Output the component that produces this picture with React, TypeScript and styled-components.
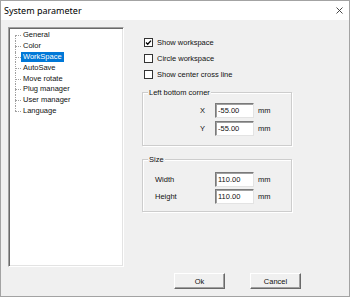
import React from 'react';
import styled, { createGlobalStyle } from 'styled-components';

const Global = createGlobalStyle`
  html, body { margin: 0; padding: 0; background: #fff; }
  body { font-family: "Liberation Sans", Arial, sans-serif; }
`;

const Window = styled.div`
  box-sizing: border-box;
  width: 350px;
  height: 297px;
  border: 1px solid #a3a3a3;
  display: flex;
  flex-direction: column;
  background: #f0f0f0;
`;

const TitleBar = styled.div`
  height: 19px;
  background: #fff;
  display: flex;
  align-items: center;
  justify-content: space-between;
  padding: 0 6px 0 3px;
  font-family: "Noto Sans", "Open Sans", sans-serif;
  font-size: 9px;
  color: #000;
`;

const Body = styled.div`
  flex: 1;
  display: flex;
  flex-direction: column;
  padding: 7px 0 0 7px;
  font-size: 7.5px;
  color: #111;
`;

const MainRow = styled.div`
  display: flex;
  height: 240px;
`;

const Tree = styled.div`
  box-sizing: border-box;
  width: 116px;
  height: 240px;
  background: #fff;
  border: 1px solid;
  border-color: #a0a0a0 #fff #fff #a0a0a0;
  box-shadow: inset 1px 1px 0 #696969, inset -1px -1px 0 #e3e3e3;
  padding-top: 2px;
  display: flex;
  flex-direction: column;
`;

const TreeItem = styled.div<{ $first?: boolean; $last?: boolean }>`
  position: relative;
  height: 10.8px;
  display: flex;
  align-items: center;
  padding-left: 12px;
  &::before {
    content: "";
    position: absolute;
    left: 6px;
    width: 6px;
    top: 50%;
    border-top: 1px dotted #a0a0a0;
  }
  &::after {
    content: "";
    position: absolute;
    left: 6px;
    top: ${p => (p.$first ? '50%' : '0')};
    bottom: ${p => (p.$last ? '50%' : '0')};
    border-left: 1px dotted #a0a0a0;
  }
`;

const TreeLabel = styled.span<{ $selected?: boolean }>`
  padding: 0 2px;
  line-height: 10px;
  background: ${p => (p.$selected ? '#0078d7' : 'transparent')};
  color: ${p => (p.$selected ? '#fff' : '#111')};
`;

const RightPanel = styled.div`
  display: flex;
  flex-direction: column;
  margin-left: 18px;
  padding-top: 7px;
  width: 150px;
`;

const CheckRow = styled.div`
  display: flex;
  align-items: center;
  height: 16px;
  gap: 4px;
`;

const CheckBox = styled.span`
  box-sizing: border-box;
  width: 9px;
  height: 9px;
  margin-left: 2px;
  border: 1px solid #333;
  background: #fff;
  display: flex;
  align-items: center;
  justify-content: center;
`;

const Group = styled.div<{ $top: number; $pt: number; $pb: number; $gap: number }>`
  position: relative;
  margin-top: ${p => p.$top}px;
  border: 1px solid #cdcdcd;
  box-shadow: 1px 1px 0 #fff, inset 1px 1px 0 #fff;
  padding: ${p => p.$pt}px 0 ${p => p.$pb}px 0;
  display: flex;
  flex-direction: column;
  gap: ${p => p.$gap}px;
`;

const Legend = styled.span`
  position: absolute;
  top: -5px;
  left: 5px;
  padding: 0 1px;
  background: #f0f0f0;
  line-height: 9px;
`;

const FieldRow = styled.div`
  display: grid;
  grid-template-columns: 72px 39px auto;
  align-items: center;
`;

const FieldLabel = styled.span<{ $indent: number }>`
  padding-left: ${p => p.$indent}px;
`;

const Input = styled.input`
  box-sizing: border-box;
  width: 39px;
  height: 15px;
  margin: 0;
  padding: 0 2px;
  font-family: "Liberation Sans", Arial, sans-serif;
  font-size: 7.5px;
  color: #111;
  background: #fff;
  border: 1px solid;
  border-color: #7a7a7a #e3e3e3 #e3e3e3 #7a7a7a;
  box-shadow: inset 1px 1px 0 #a0a0a0;
  outline: none;
`;

const Unit = styled.span`
  margin-left: 4px;
`;

const ButtonRow = styled.div`
  display: flex;
  justify-content: flex-end;
  gap: 25px;
  margin-top: 6px;
  padding-right: 48px;
`;

const Button = styled.button`
  box-sizing: border-box;
  width: 51px;
  height: 16px;
  margin: 0;
  padding: 0;
  font-family: "Liberation Sans", Arial, sans-serif;
  font-size: 7.5px;
  color: #111;
  background: #f0f0f0;
  border: 1px solid;
  border-color: #fff #696969 #696969 #fff;
  box-shadow: inset -1px -1px 0 #a0a0a0;
`;

const treeItems = ['General', 'Color', 'WorkSpace', 'AutoSave', 'Move rotate', 'Plug manager', 'User manager', 'Language'];

export default function App() {
  return (
    <>
      <Global />
      <Window>
        <TitleBar>
          <span>System parameter</span>
          <svg width="7" height="7" viewBox="0 0 7 7">
            <path d="M0.5 0.5 L6.5 6.5 M6.5 0.5 L0.5 6.5" stroke="#333" strokeWidth="0.9" />
          </svg>
        </TitleBar>
        <Body>
          <MainRow>
            <Tree>
              {treeItems.map((t, i) => (
                <TreeItem key={t} $first={i === 0} $last={i === treeItems.length - 1}>
                  <TreeLabel $selected={t === 'WorkSpace'}>{t}</TreeLabel>
                </TreeItem>
              ))}
            </Tree>
            <RightPanel>
              <CheckRow>
                <CheckBox>
                  <svg width="7" height="7" viewBox="0 0 7 7">
                    <path d="M1 3.5 L2.7 5.2 L6 1.6" stroke="#000" strokeWidth="1.3" fill="none" />
                  </svg>
                </CheckBox>
                <span>Show workspace</span>
              </CheckRow>
              <CheckRow>
                <CheckBox />
                <span>Circle workspace</span>
              </CheckRow>
              <CheckRow>
                <CheckBox />
                <span>Show center cross line</span>
              </CheckRow>
              <Group $top={10} $pt={10} $pb={9} $gap={3}>
                <Legend>Left bottom corner</Legend>
                <FieldRow>
                  <FieldLabel $indent={57}>X</FieldLabel>
                  <Input readOnly value="-55.00" />
                  <Unit>mm</Unit>
                </FieldRow>
                <FieldRow>
                  <FieldLabel $indent={57}>Y</FieldLabel>
                  <Input readOnly value="-55.00" />
                  <Unit>mm</Unit>
                </FieldRow>
              </Group>
              <Group $top={13} $pt={12} $pb={7} $gap={2}>
                <Legend>Size</Legend>
                <FieldRow>
                  <FieldLabel $indent={12}>Width</FieldLabel>
                  <Input readOnly value="110.00" />
                  <Unit>mm</Unit>
                </FieldRow>
                <FieldRow>
                  <FieldLabel $indent={12}>Height</FieldLabel>
                  <Input readOnly value="110.00" />
                  <Unit>mm</Unit>
                </FieldRow>
              </Group>
            </RightPanel>
          </MainRow>
          <ButtonRow>
            <Button>Ok</Button>
            <Button>Cancel</Button>
          </ButtonRow>
        </Body>
      </Window>
    </>
  );
}
